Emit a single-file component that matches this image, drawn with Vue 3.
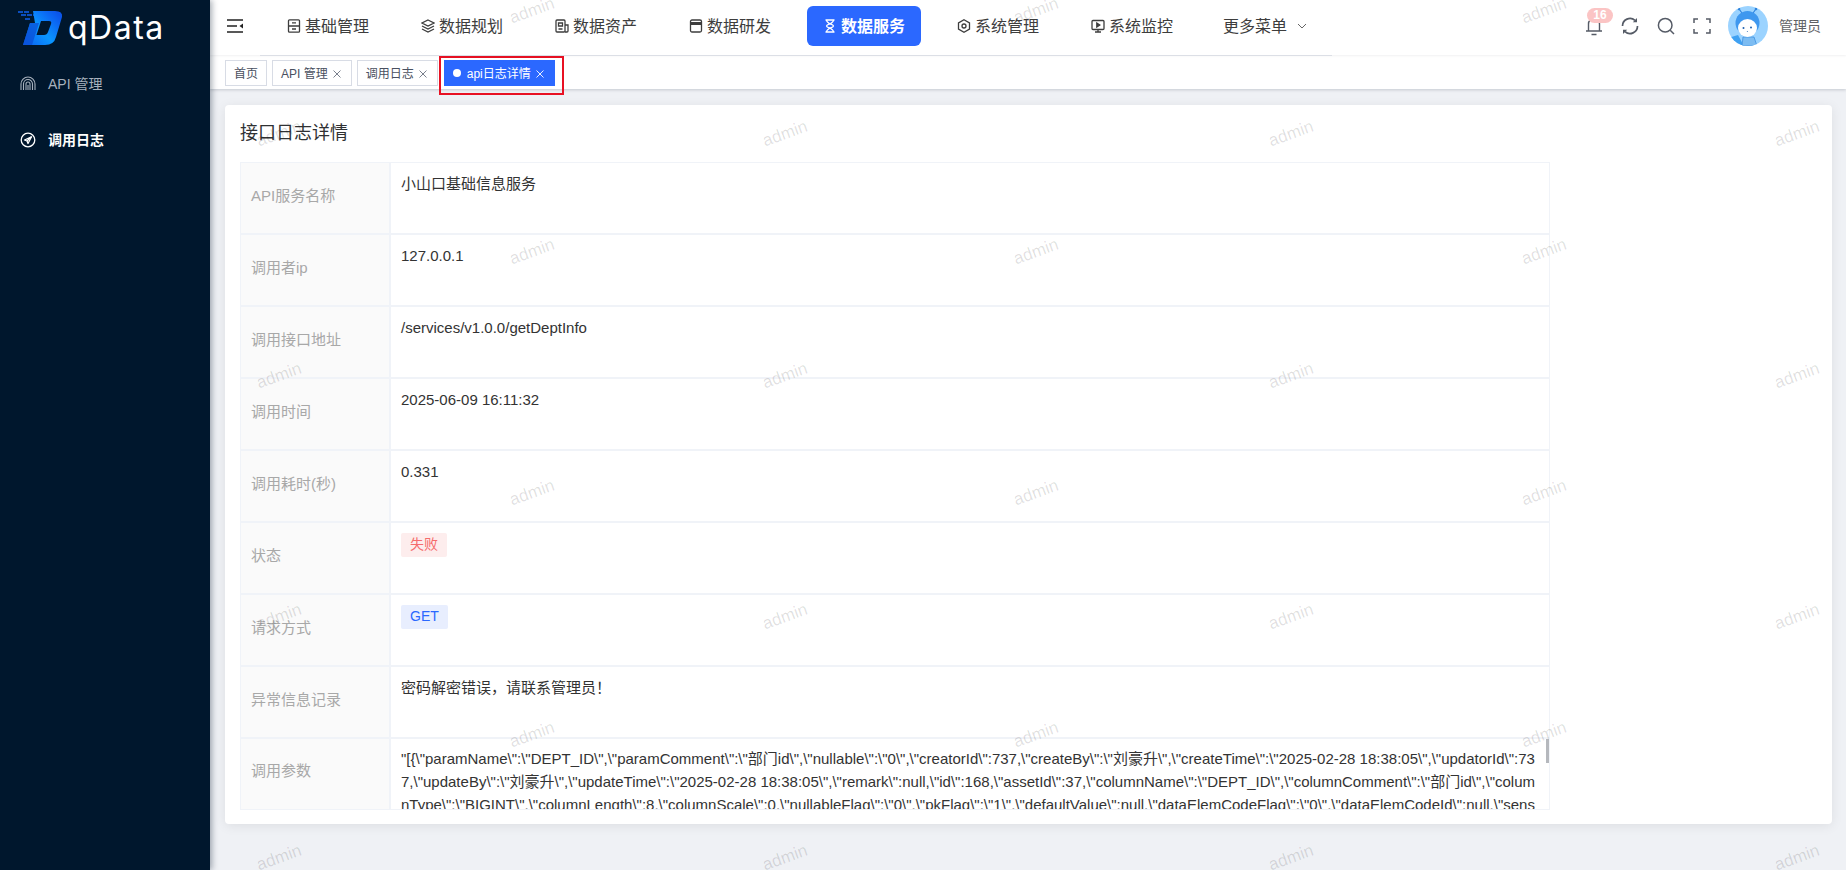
<template>
  <div class="layout">
    <aside class="sidebar">
      <div class="logo">
        <svg class="logo-mark" width="46" height="34" viewBox="0 0 46 34">
          <defs>
            <linearGradient id="logoGrad" x1="0" y1="1" x2="1" y2="0.2">
              <stop offset="0" stop-color="#0b5cf0" />
              <stop offset="0.5" stop-color="#0a96ff" />
              <stop offset="0.8" stop-color="#0b6cf5" />
              <stop offset="1" stop-color="#0b55ea" />
            </linearGradient>
          </defs>
          <path d="M1 1h11M4 4h13M8 8h5" stroke="#0f62f0" stroke-width="1.500" stroke-dasharray="5 1" fill="none" />
          <path fill="url(#logoGrad)" fill-rule="evenodd" d="M16 0H38Q46 0 45 6L39 26Q37 34 28 34H6L13 12H18ZM24 10 19.500 24H27Q30 24 31 21L34 13Q35 10 32 10Z" />
          <path fill="#0a4fd6" d="M13 12H22L18.500 23H9.500ZM9.500 23H18.500L15 34H6Z" opacity="0.75" />
        </svg>
        <span class="logo-text">qData</span>
      </div>
      <nav class="side-menu">
        <div class="side-item">
          <svg class="side-icon" viewBox="0 0 16 16" fill="none" stroke="currentColor" stroke-width="1.100">
            <path d="M1 14V8a7 7 0 0 1 14 0v6M3.500 14V8a4.500 4.500 0 0 1 9 0v6M6 14V8a2 2 0 0 1 4 0v6M8 9v5" />
          </svg>
          <span>API 管理</span>
        </div>
        <div class="side-item active">
          <svg class="side-icon" viewBox="0 0 16 16" fill="none" stroke="currentColor" stroke-width="1.300">
            <circle cx="8" cy="8" r="6.800" />
            <path d="M11.500 4.800 4.500 8l2.500 1 1 2.500z" stroke-linejoin="round" />
            <path d="M7 9l4.500-4.200" />
          </svg>
          <span>调用日志</span>
        </div>
      </nav>
    </aside>

    <div class="main">
      <header class="header">
        <div class="fold-btn">
          <svg width="16" height="14" viewBox="0 0 16 14" fill="none" stroke="#222" stroke-width="1.600">
            <path d="M0 1h16M0 7h10M0 13h16" />
            <path d="M16 4.500v5L12.500 7z" fill="#222" stroke="none" />
          </svg>
        </div>
        <div class="top-menu">
          <div v-for="item in menus" :key="item.name" class="menu-item" :class="{ active: item.active }">
            <svg class="menu-icon" viewBox="0 0 14 14" fill="none" stroke="currentColor" stroke-width="1.300" v-html="item.icon"></svg>
            <span class="menu-text">{{ item.name }}</span>
          </div>
          <div class="menu-more">
            <span class="menu-text">更多菜单</span>
            <svg width="10" height="10" viewBox="0 0 10 10" fill="none" stroke="#555" stroke-width="0.900">
              <path d="M1 3l4 4 4-4" />
            </svg>
          </div>
        </div>
        <div class="tools">
          <div class="tool bell">
            <svg width="18" height="20" viewBox="0 0 18 20" fill="none" stroke="#555b66" stroke-width="1.400">
              <path d="M3.500 15V8a5.500 5.500 0 0 1 11 0v7M1 15h16M6.500 18.500h5" />
            </svg>
            <span class="badge">16</span>
          </div>
          <div class="tool">
            <svg width="18" height="18" viewBox="0 0 18 18" fill="none" stroke="#555b66" stroke-width="1.700">
              <path d="M1.500 9A7.500 7.500 0 0 1 14 3.400M16.500 9A7.500 7.500 0 0 1 4 14.600" />
              <path d="M11.800 5.200h4.200V1z" fill="#555b66" stroke="none" />
              <path d="M6.200 12.800H2V17z" fill="#555b66" stroke="none" />
            </svg>
          </div>
          <div class="tool">
            <svg width="18" height="18" viewBox="0 0 18 18" fill="none" stroke="#555b66" stroke-width="1.500">
              <circle cx="8.200" cy="8.200" r="6.800" />
              <path d="M13.200 13.200 17 17" />
            </svg>
          </div>
          <div class="tool">
            <svg width="18" height="16" viewBox="0 0 18 16" fill="none" stroke="#555b66" stroke-width="1.500">
              <path d="M1 5V1h4M13 1h4v4M17 11v4h-4M5 15H1v-4" />
            </svg>
          </div>
          <svg class="avatar" width="40" height="40" viewBox="0 0 40 40">
            <defs>
              <clipPath id="avatarClip"><circle cx="20" cy="20" r="20" /></clipPath>
            </defs>
            <g clip-path="url(#avatarClip)">
              <rect width="40" height="40" fill="#9bd3ff" />
              <path d="M0 32 10 29 16 40H0Z" fill="#3fa1f2" />
              <path d="M15 31h11l3 9H14Z" fill="#7cbcf2" stroke="#3f8fe0" stroke-width="0.800" />
              <path d="M14 7 11 3M25 7l3-4" stroke="#2d83dd" stroke-width="1.200" />
              <circle cx="11" cy="3" r="1.300" fill="#2d83dd" />
              <circle cx="28" cy="3" r="1.300" fill="#2d83dd" />
              <ellipse cx="19.500" cy="17" rx="12" ry="12" fill="#3f98ef" />
              <ellipse cx="19.500" cy="22" rx="9.500" ry="9" fill="#fff" />
              <circle cx="15.500" cy="22" r="1" fill="#1e5fb0" />
              <circle cx="23" cy="21.500" r="1" fill="#1e5fb0" />
              <path d="M19 25l.8 1" stroke="#1e5fb0" stroke-width="0.700" />
            </g>
          </svg>
          <span class="user-name">管理员</span>
        </div>
      </header>

      <div class="tags-bar">
        <div class="tag-item">首页</div>
        <div class="tag-item closable">
          <span>API 管理</span>
          <svg class="tag-close" viewBox="0 0 8 8"><path d="M.5.5l7 7M7.500.5l-7 7" /></svg>
        </div>
        <div class="tag-item closable">
          <span>调用日志</span>
          <svg class="tag-close" viewBox="0 0 8 8"><path d="M.5.5l7 7M7.500.5l-7 7" /></svg>
        </div>
        <div class="tag-item active">
          <i class="tag-dot"></i>
          <span>api日志详情</span>
          <svg class="tag-close" viewBox="0 0 8 8"><path d="M.5.5l7 7M7.500.5l-7 7" /></svg>
          <div class="red-box"></div>
        </div>
      </div>

      <div class="content">
        <div class="card">
          <h3 class="card-title">接口日志详情</h3>
          <div class="desc-table">
            <div v-for="row in rows" :key="row.label" class="desc-row">
              <div class="desc-label">{{ row.label }}</div>
              <div class="desc-value">
                <span v-if="row.tag" class="tag" :class="row.tag">{{ row.value }}</span>
                <template v-else>{{ row.value }}</template>
              </div>
            </div>
            <div class="desc-row last">
              <div class="desc-label">调用参数</div>
              <div class="desc-value params">{{ params }}<i class="scroll-thumb"></i></div>
            </div>
          </div>
        </div>
      </div>

      <div class="watermarks">
        <span v-for="(m, i) in marks" :key="i" class="mark" :style="{ left: m.x + 'px', top: m.y + 'px' }">admin</span>
      </div>
    </div>
  </div>
</template>

<script setup>
const menus = [
  { name: '基础管理', icon: '<rect x="1.500" y="0.800" width="11" height="12.400" rx="1"/><path d="M1.500 7h11M5 3.800h4M5 10h4"/>' },
  { name: '数据规划', icon: '<path d="M7 1l6 3-6 3-6-3z"/><path d="M1 7l6 3 6-3M1 10l6 3 6-3"/>' },
  { name: '数据资产', icon: '<rect x="1" y="1" width="9" height="12" rx="1"/><path d="M10 6h3v6a1 1 0 0 1-1 1h-2M3.500 4h4v3h-4zM3.500 10h4"/>' },
  { name: '数据研发', icon: '<rect x="1.500" y="1" width="11" height="12" rx="1.500"/><path d="M1.500 4.500h11" stroke-width="3"/>' },
  { name: '数据服务', active: true, icon: '<path d="M2.500 1h9M2.500 13h9M3.500 1c0 4 7 4 7 6s-7 2-7 6M10.500 1c0 4-7 4-7 6s7 2 7 6"/>' },
  { name: '系统管理', icon: '<path d="M7 .8l5.500 3.100v6.200L7 13.200 1.500 10.100V3.900z"/><circle cx="7" cy="7" r="2"/>' },
  { name: '系统监控', icon: '<rect x="1" y="1.500" width="12" height="9" rx="1"/><path d="M7 10.500v2.500M4 13h6"/><path d="M5.800 4l3 2-3 2z" fill="currentColor"/>' }
];

const rows = [
  { label: 'API服务名称', value: '小山口基础信息服务' },
  { label: '调用者ip', value: '127.0.0.1' },
  { label: '调用接口地址', value: '/services/v1.0.0/getDeptInfo' },
  { label: '调用时间', value: '2025-06-09 16:11:32' },
  { label: '调用耗时(秒)', value: '0.331' },
  { label: '状态', value: '失败', tag: 'danger' },
  { label: '请求方式', value: 'GET', tag: 'primary' },
  { label: '异常信息记录', value: '密码解密错误，请联系管理员！' }
];

const params = String.raw`"[{\"paramName\":\"DEPT_ID\",\"paramComment\":\"部门id\",\"nullable\":\"0\",\"creatorId\":737,\"createBy\":\"刘豪升\",\"createTime\":\"2025-02-28 18:38:05\",\"updatorId\":737,\"updateBy\":\"刘豪升\",\"updateTime\":\"2025-02-28 18:38:05\",\"remark\":null,\"id\":168,\"assetId\":37,\"columnName\":\"DEPT_ID\",\"columnComment\":\"部门id\",\"columnType\":\"BIGINT\",\"columnLength\":8,\"columnScale\":0,\"nullableFlag\":\"0\",\"pkFlag\":\"1\",\"defaultValue\":null,\"dataElemCodeFlag\":\"0\",\"dataElemCodeId\":null,\"sensitiveLevel\":null}]"`;

// watermark lattice, offset by the sidebar width
const marks = [];
const columns = [279, 532, 785, 1036, 1291, 1544, 1797];
columns.forEach((x, i) => {
  const ys = i % 2 === 0 ? [135, 377, 618, 859] : [12, 253, 494, 736];
  ys.forEach((y) => marks.push({ x: x - 210 - 23, y: y - 11 }));
});
</script>

<style>
html,
body {
  margin: 0;
  height: 100%;
  overflow: hidden;
}
</style>

<style scoped>
.layout {
  display: flex;
  height: 870px;
  font-family: "Liberation Sans", "Noto Sans CJK SC", sans-serif;
  font-size: 14px;
  color: #333;
  background: #eff1f5;
  overflow: hidden;
}

.sidebar {
  width: 210px;
  flex-shrink: 0;
  background: #00172d;
  box-shadow: 2px 0 6px rgba(0, 21, 41, 0.35);
  position: relative;
  z-index: 3;
}

.logo {
  height: 56px;
  display: flex;
  align-items: flex-start;
  padding: 11px 0 0 17px;
  box-sizing: border-box;
}

.logo-text {
  margin-left: 5px;
  font-family: Inter, sans-serif;
  font-size: 32px;
  line-height: 34px;
  color: #fff;
  letter-spacing: 1.500px;
}

.side-item {
  height: 56px;
  display: flex;
  align-items: center;
  padding-left: 20px;
  color: #a7b1bd;
}

.side-item span {
  margin-bottom: 2px;
}

.side-item.active {
  color: #fff;
  font-weight: bold;
}

.side-icon {
  width: 16px;
  height: 16px;
  margin-right: 12px;
}

.main {
  flex: 1;
  min-width: 0;
  position: relative;
  display: flex;
  flex-direction: column;
}

.header {
  height: 55px;
  flex-shrink: 0;
  display: flex;
  background: #fff;
  box-shadow: 0 1px 2px rgba(0, 21, 41, 0.06);
  position: relative;
  z-index: 1;
}

.fold-btn {
  width: 50px;
  padding: 19px 0 0 17px;
  box-sizing: border-box;
}

.top-menu {
  width: 1072px;
  height: 56px;
  box-sizing: border-box;
  padding: 6px 0 0 11px;
  display: flex;
  align-items: flex-start;
  border-bottom: 1px solid #dcdfe6;
  font-size: 16px;
  color: #3d3d3d;
}

.menu-item {
  height: 40px;
  width: 114px;
  margin-right: 20px;
  padding-left: 16px;
  box-sizing: border-box;
  display: flex;
  align-items: center;
  gap: 4px;
  border-radius: 6px;
  flex-shrink: 0;
}

.menu-text {
  margin-bottom: 3px;
}

.menu-item.active {
  background: #2b68ff;
  color: #fff;
  font-weight: bold;
}

.menu-icon {
  width: 14px;
  height: 14px;
  flex-shrink: 0;
}

.menu-more {
  height: 40px;
  display: flex;
  align-items: center;
  gap: 10px;
  margin-left: 14px;
}

.tools {
  height: 52px;
  display: flex;
  align-items: center;
  padding-left: 245px;
  margin-left: -1px;
  flex-shrink: 0;
}

.tool {
  width: 36px;
  display: flex;
  justify-content: center;
  position: relative;
}

.badge {
  position: absolute;
  left: 11px;
  top: -8px;
  width: 26px;
  height: 15px;
  border-radius: 8px;
  background: #fbc4c4;
  color: #fff;
  font-size: 12px;
  font-weight: bold;
  line-height: 15px;
  text-align: center;
}

.avatar {
  margin-left: 8px;
  flex-shrink: 0;
}

.user-name {
  margin-left: 11px;
  margin-bottom: 2px;
  color: #606266;
  white-space: nowrap;
}

.tags-bar {
  height: 34px;
  flex-shrink: 0;
  box-sizing: border-box;
  padding: 5px 0 0 15px;
  display: flex;
  gap: 5px;
  background: #fff;
  box-shadow: 0 1px 3px rgba(0, 21, 41, 0.18);
}

.tag-item {
  height: 26px;
  box-sizing: border-box;
  padding: 0 8px 1px;
  display: flex;
  align-items: center;
  border: 1px solid #d8dce5;
  background: #fff;
  color: #495060;
  font-size: 12px;
  white-space: nowrap;
  position: relative;
}

.tag-item.closable {
  padding-right: 10px;
}

.tag-close {
  width: 8px;
  height: 8px;
  margin-left: 5px;
  margin-top: 2px;
  fill: none;
  stroke: #6b7280;
  stroke-width: 0.900;
}

.tag-item.active {
  margin-left: 1px;
  padding: 0 10px 1px 8px;
  background: #2b68ff;
  border-color: #2b68ff;
  color: #fff;
}

.tag-item.active .tag-close {
  stroke: #fff;
}

.tag-dot {
  width: 8px;
  height: 8px;
  border-radius: 50%;
  background: #fff;
  margin-right: 6px;
}

.red-box {
  position: absolute;
  left: -6px;
  right: -10px;
  top: -5px;
  bottom: -10px;
  border: 2px solid #e81123;
  pointer-events: none;
}

.content {
  flex: 1;
  padding: 16px 14px 0 15px;
  min-height: 0;
}

.card {
  height: 719px;
  box-sizing: border-box;
  padding: 0 15px;
  background: #fff;
  border-radius: 4px;
  box-shadow: 0 2px 12px rgba(0, 0, 0, 0.08);
  overflow: hidden;
}

.card-title {
  margin: 0;
  height: 57px;
  line-height: 56px;
  font-size: 18px;
  font-weight: normal;
  color: #303133;
}

.desc-table {
  width: 1310px;
  height: 648px;
  box-sizing: border-box;
  border: 1px solid #f0f3f8;
  overflow: hidden;
}

.desc-row {
  display: flex;
  height: 72px;
  box-sizing: border-box;
  border-bottom: 2px solid #f0f3f8;
}

.desc-row.last {
  height: 120px;
  border-bottom: none;
}

.desc-label {
  width: 150px;
  flex-shrink: 0;
  box-sizing: border-box;
  padding: 22px 10px 0;
  background: #fafafa;
  border-right: 2px solid #f0f3f8;
  color: #a8a8a8;
  font-size: 15px;
  line-height: 22px;
}

.desc-row.last .desc-label {
  padding-top: 21px;
}

.desc-value {
  flex: 1;
  min-width: 0;
  padding: 10px 10px 0 10px;
  font-size: 15px;
  line-height: 22px;
  color: #333;
  position: relative;
}

.params {
  padding-top: 8px;
  padding-right: 13px;
  line-height: 23px;
  word-break: break-all;
}

.scroll-thumb {
  position: absolute;
  right: 0;
  top: 0;
  width: 3px;
  height: 24px;
  background: #b5b8bd;
}

.tag {
  display: inline-block;
  height: 24px;
  line-height: 23px;
  padding: 0 9px;
  border-radius: 2px;
  font-size: 14px;
  vertical-align: top;
}

.tag.danger {
  background: #fdeded;
  color: #f56c6c;
}

.tag.primary {
  background: #e8eefe;
  color: #2b68ff;
}

.watermarks {
  position: absolute;
  left: 0;
  top: 0;
  right: 0;
  bottom: 0;
  overflow: hidden;
  pointer-events: none;
  z-index: 2;
}

.mark {
  position: absolute;
  font-size: 17px;
  color: rgba(0, 0, 0, 0.13);
  transform: rotate(-20deg);
  font-family: "Liberation Sans", sans-serif;
}
</style>
